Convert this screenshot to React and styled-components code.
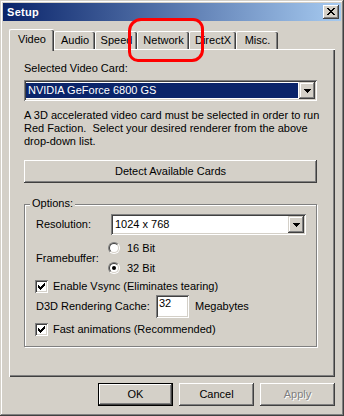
import React from "react";
import styled, { createGlobalStyle, css } from "styled-components";

const GlobalStyle = createGlobalStyle`
  html, body { margin: 0; padding: 0; background: #D4D0C8; }
  body { font-family: "Liberation Sans", Arial, sans-serif; font-size: 11px; color: #000; }
  * { box-sizing: border-box; }
`;

const raised = css`
  box-shadow: inset -1px -1px #404040, inset 1px 1px #D4D0C8,
    inset -2px -2px #808080, inset 2px 2px #ffffff;
`;
const buttonBevel = css`
  box-shadow: inset -1px -1px #404040, inset 1px 1px #ffffff,
    inset -2px -2px #808080, inset 2px 2px #D4D0C8;
`;
const sunken = css`
  box-shadow: inset 1px 1px #808080, inset -1px -1px #ffffff,
    inset 2px 2px #404040, inset -2px -2px #D4D0C8;
`;

const Window = styled.div`
  position: relative;
  width: 344px;
  height: 416px;
  padding: 3px;
  background: #D4D0C8;
  display: flex;
  flex-direction: column;
  ${raised}
`;

const TitleBar = styled.div`
  height: 18px;
  display: flex;
  align-items: center;
  justify-content: space-between;
  padding: 0 2px 0 2px;
  background: linear-gradient(to right, #0A246A, #A6CAF0);
`;

const Title = styled.span`
  color: #fff;
  font-weight: bold;
  font-size: 11px;
  line-height: 13px;
  letter-spacing: 0.3px;
  padding-left: 2px;
`;

const CloseButton = styled.div`
  width: 16px;
  height: 14px;
  background: #D4D0C8;
  display: flex;
  align-items: center;
  justify-content: center;
  padding-bottom: 1px;
  ${buttonBevel}
`;

const Body = styled.div`
  flex: 1;
  display: flex;
  flex-direction: column;
  padding: 8px 6px 7px 6px;
`;

const TabStrip = styled.div`
  height: 20px;
  display: flex;
  align-items: flex-end;
  position: relative;
  z-index: 1;
`;

const Tab = styled.div`
  width: ${(p) => p.$w}px;
  height: ${(p) => (p.$active ? 22 : 18)}px;
  margin-bottom: ${(p) => (p.$active ? -2 : 0)}px;
  padding-top: ${(p) => (p.$active ? 3 : 2)}px;
  background: #D4D0C8;
  border-top: 1px solid #fff;
  border-left: 1px solid #fff;
  border-top-left-radius: 2px;
  border-top-right-radius: 2px;
  box-shadow: inset -1px 0 #404040, inset -2px 0 #808080;
  text-align: center;
  line-height: 13px;
  white-space: nowrap;
`;

const Panel = styled.div`
  flex: 1;
  display: flex;
  flex-direction: column;
  padding: 13px 18px 0 15px;
  box-shadow: inset 1px 1px #fff, inset -1px -1px #404040, inset -2px -2px #808080;
`;

const Text = styled.div`
  line-height: 13px;
  white-space: pre;
  margin-top: ${(p) => p.$mt || 0}px;
`;

const Combo = styled.div`
  display: flex;
  height: 21px;
  padding: 2px;
  background: #fff;
  margin-top: ${(p) => p.$mt || 0}px;
  flex: ${(p) => (p.$grow ? 1 : "none")};
  ${sunken}
`;

const ComboValue = styled.div`
  flex: 1;
  margin: 1px 1px 1px 0;
  padding-left: 2px;
  line-height: 15px;
  white-space: nowrap;
  background: ${(p) => (p.$selected ? "#0A246A" : "#fff")};
  color: ${(p) => (p.$selected ? "#fff" : "#000")};
`;

const DropButton = styled.div`
  width: 16px;
  height: 17px;
  background: #D4D0C8;
  display: flex;
  align-items: center;
  justify-content: center;
  ${raised}
`;

const Button = styled.div`
  height: 23px;
  width: ${(p) => (p.$w ? `${p.$w}px` : "auto")};
  display: flex;
  align-items: center;
  justify-content: center;
  background: #D4D0C8;
  margin-top: ${(p) => p.$mt || 0}px;
  border: ${(p) => (p.$default ? "1px solid #000" : "none")};
  color: ${(p) => (p.$disabled ? "#808080" : "#000")};
  text-shadow: ${(p) => (p.$disabled ? "1px 1px 0 #fff" : "none")};
  line-height: 13px;
  ${buttonBevel}
`;

const Group = styled.div`
  position: relative;
  margin-top: ${(p) => p.$mt || 0}px;
  border: 1px solid #808080;
  box-shadow: 1px 1px 0 #fff, inset 1px 1px 0 #fff;
  width: 293px;
  padding: 9px 10px 9px 10px;
  display: flex;
  flex-direction: column;
`;

const Legend = styled.span`
  position: absolute;
  left: 5px;
  top: -8px;
  padding: 0 2px;
  background: #D4D0C8;
  line-height: 13px;
`;

const Row = styled.div`
  display: flex;
  align-items: center;
  height: ${(p) => p.$h}px;
  margin-top: ${(p) => p.$mt || 0}px;
`;

const FieldLabel = styled.span`
  width: ${(p) => p.$w}px;
  margin-left: 1px;
  line-height: 13px;
  flex: none;
  white-space: nowrap;
`;

const RadioColumn = styled.div`
  display: flex;
  flex-direction: column;
`;

const RadioRow = styled.div`
  display: flex;
  align-items: center;
  height: 20px;
  gap: 7px;
  line-height: 13px;
`;

const RadioOuter = styled.span`
  width: 12px;
  height: 12px;
  border-radius: 50%;
  border: 1px solid;
  border-color: #808080 #fff #fff #808080;
  display: flex;
  flex: none;
`;

const RadioInner = styled.span`
  width: 10px;
  height: 10px;
  border-radius: 50%;
  border: 1px solid;
  border-color: #404040 #D4D0C8 #D4D0C8 #404040;
  background: #fff;
  display: flex;
  align-items: center;
  justify-content: center;
`;

const RadioDot = styled.span`
  width: 4px;
  height: 4px;
  border-radius: 50%;
  background: #000;
`;

const CheckRow = styled.div`
  display: flex;
  align-items: center;
  gap: 5px;
  height: 16px;
  margin-top: ${(p) => p.$mt || 0}px;
  line-height: 13px;
`;

const CheckBox = styled.span`
  width: 13px;
  height: 13px;
  background: #fff;
  display: flex;
  align-items: center;
  justify-content: center;
  flex: none;
  ${sunken}
`;

const Edit = styled.div`
  width: 33px;
  height: 23px;
  padding: 2px 3px;
  background: #fff;
  line-height: 13px;
  flex: none;
  ${sunken}
`;

const Suffix = styled.span`
  margin-left: 6px;
  line-height: 13px;
`;

const ButtonRow = styled.div`
  display: flex;
  justify-content: flex-end;
  gap: 6px;
  margin-top: 6px;
`;

const Annotation = styled.div`
  position: absolute;
  left: 128px;
  top: 18px;
  width: 76px;
  height: 44px;
  border: 3px solid #ff0000;
  border-radius: 13px 11px 12px 10px;
  pointer-events: none;
  z-index: 5;
`;

const CloseGlyph = () => (
  <svg width="8" height="7" viewBox="0 0 8 7" shapeRendering="crispEdges">
    {[
      [0, 0], [6, 0], [1, 1], [5, 1], [2, 2], [4, 2], [3, 3],
      [2, 4], [4, 4], [1, 5], [5, 5], [0, 6], [6, 6],
    ].map(([x, y], i) => (
      <rect key={i} x={x} y={y} width="2" height="1" fill="#000" />
    ))}
  </svg>
);

const Arrow = () => (
  <svg width="7" height="4" viewBox="0 0 7 4" shapeRendering="crispEdges">
    <rect x="0" y="0" width="7" height="1" fill="#000" />
    <rect x="1" y="1" width="5" height="1" fill="#000" />
    <rect x="2" y="2" width="3" height="1" fill="#000" />
    <rect x="3" y="3" width="1" height="1" fill="#000" />
  </svg>
);

const CheckMark = () => (
  <svg width="7" height="7" viewBox="0 0 7 7" shapeRendering="crispEdges">
    {[2, 3, 4, 3, 2, 1, 0].map((y, x) => (
      <rect key={x} x={x} y={y} width="1" height="3" fill="#000" />
    ))}
  </svg>
);

const Radio = ({ checked, label }) => (
  <RadioRow>
    <RadioOuter>
      <RadioInner>{checked && <RadioDot />}</RadioInner>
    </RadioOuter>
    <span>{label}</span>
  </RadioRow>
);

const Check = ({ label, mt }) => (
  <CheckRow $mt={mt}>
    <CheckBox>
      <CheckMark />
    </CheckBox>
    <span>{label}</span>
  </CheckRow>
);

const tabs = [
  { label: "Video", w: 45 },
  { label: "Audio", w: 41 },
  { label: "Speed", w: 42 },
  { label: "Network", w: 52 },
  { label: "DirectX", w: 47 },
  { label: "Misc.", w: 42 },
];

export default function App() {
  return (
    <>
      <GlobalStyle />
      <Window>
        <TitleBar>
          <Title>Setup</Title>
          <CloseButton>
            <CloseGlyph />
          </CloseButton>
        </TitleBar>
        <Body>
          <TabStrip>
            {tabs.map((t, i) => (
              <Tab key={t.label} $w={t.w} $active={i === 0}>
                {t.label}
              </Tab>
            ))}
          </TabStrip>
          <Panel>
            <Text>Selected Video Card:</Text>
            <Combo $mt={5}>
              <ComboValue $selected>NVIDIA GeForce 6800 GS</ComboValue>
              <DropButton>
                <Arrow />
              </DropButton>
            </Combo>
            <Text $mt={8}>
              {"A 3D accelerated video card must be selected in order to run\nRed Faction.  Select your desired renderer from the above\ndrop-down list."}
            </Text>
            <Button $mt={12}>Detect Available Cards</Button>
            <Group $mt={21}>
              <Legend>Options:</Legend>
              <Row $h={21}>
                <FieldLabel $w={75}>Resolution:</FieldLabel>
                <Combo $grow>
                  <ComboValue>1024 x 768</ComboValue>
                  <DropButton>
                    <Arrow />
                  </DropButton>
                </Combo>
              </Row>
              <Row $h={40} $mt={3}>
                <FieldLabel $w={72}>Framebuffer:</FieldLabel>
                <RadioColumn>
                  <Radio label="16 Bit" />
                  <Radio label="32 Bit" checked />
                </RadioColumn>
              </Row>
              <Check label="Enable Vsync (Eliminates tearing)" />
              <Row $h={23} $mt={1}>
                <FieldLabel $w={120}>D3D Rendering Cache:</FieldLabel>
                <Edit>32</Edit>
                <Suffix>Megabytes</Suffix>
              </Row>
              <Check label="Fast animations (Recommended)" mt={3} />
            </Group>
          </Panel>
          <ButtonRow>
            <Button $w={75} $default>OK</Button>
            <Button $w={75}>Cancel</Button>
            <Button $w={75} $disabled>Apply</Button>
          </ButtonRow>
        </Body>
        <Annotation />
      </Window>
    </>
  );
}
